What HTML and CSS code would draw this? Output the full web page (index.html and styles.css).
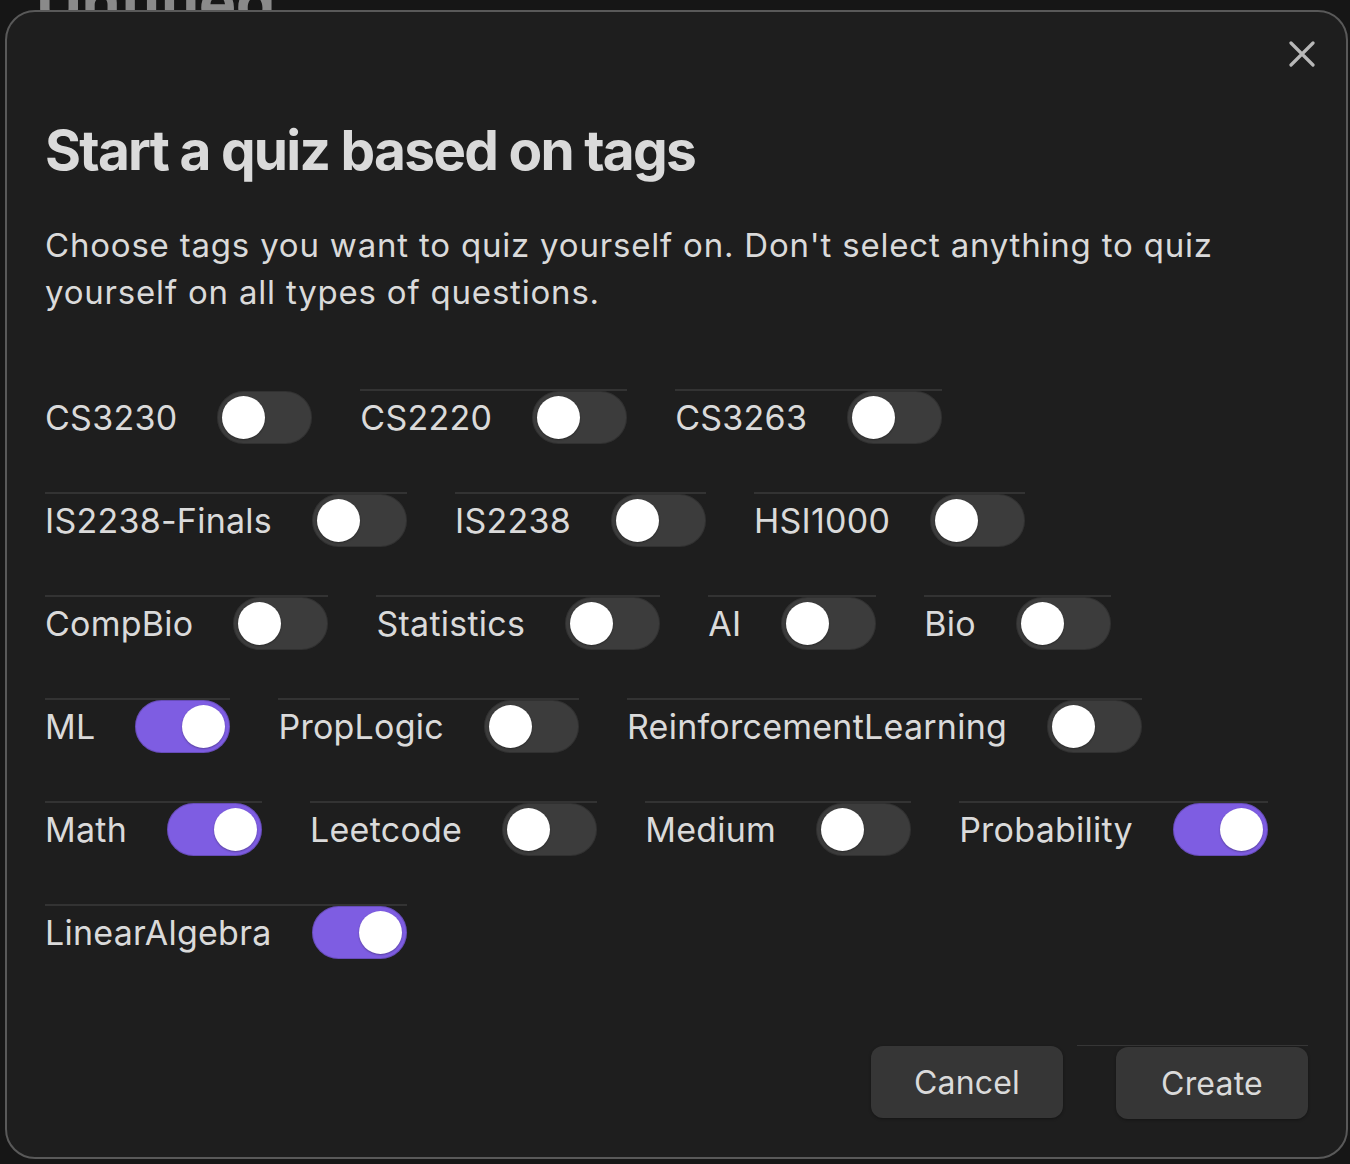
FILE: index.html
```html
<!DOCTYPE html>
<html>
<head>
<meta charset="utf-8">
<link rel="stylesheet" href="styles.css">
</head>
<body>
<div class="page">
  <h1 class="doc-title">Untitled</h1>
</div>
<div class="modal">
  <button class="close" aria-label="Close">
    <svg width="26" height="26" viewBox="0 0 26 26"><path d="M2 2 L24 24 M24 2 L2 24" stroke="#b8b8b8" stroke-width="3.2" stroke-linecap="round"/></svg>
  </button>
  <h2 class="title">Start a quiz based on tags</h2>
  <p class="desc">Choose tags you want to quiz yourself on. Don't select anything to quiz yourself on all types of questions.</p>
  <div class="tags">
    <div class="item first"><span class="label">CS3230</span><span class="toggle"></span></div>
    <div class="item"><span class="label">CS2220</span><span class="toggle"></span></div>
    <div class="item"><span class="label">CS3263</span><span class="toggle"></span></div>
    <div class="item"><span class="label">IS2238-Finals</span><span class="toggle"></span></div>
    <div class="item"><span class="label">IS2238</span><span class="toggle"></span></div>
    <div class="item"><span class="label">HSI1000</span><span class="toggle"></span></div>
    <div class="item"><span class="label">CompBio</span><span class="toggle"></span></div>
    <div class="item"><span class="label">Statistics</span><span class="toggle"></span></div>
    <div class="item"><span class="label">AI</span><span class="toggle"></span></div>
    <div class="item"><span class="label">Bio</span><span class="toggle"></span></div>
    <div class="item"><span class="label">ML</span><span class="toggle on"></span></div>
    <div class="item"><span class="label">PropLogic</span><span class="toggle"></span></div>
    <div class="item"><span class="label">ReinforcementLearning</span><span class="toggle"></span></div>
    <div class="item"><span class="label">Math</span><span class="toggle on"></span></div>
    <div class="item"><span class="label">Leetcode</span><span class="toggle"></span></div>
    <div class="item"><span class="label">Medium</span><span class="toggle"></span></div>
    <div class="item"><span class="label">Probability</span><span class="toggle on"></span></div>
    <div class="item"><span class="label">LinearAlgebra</span><span class="toggle on"></span></div>
  </div>
  <div class="footer">
    <button class="btn cancel">Cancel</button>
    <div class="btn-item"><button class="btn">Create</button></div>
  </div>
</div>
</body>
</html>
```
FILE: styles.css
```css
html, body {
  margin: 0;
  padding: 0;
  background: #161616;
  width: 1350px;
  height: 1164px;
  overflow: hidden;
  font-family: Inter, "Noto Sans", sans-serif;
  color: #dadada;
}
.page {
  padding-left: 36px;
}
.doc-title {
  margin: -36px 0 0 0;
  font-size: 63px;
  font-weight: 700;
  line-height: 76px;
  color: #8a8a8a;
  letter-spacing: -0.5px;
}
.modal {
  position: absolute;
  top: 10px;
  left: 5px;
  width: 1343px;
  height: 1149px;
  box-sizing: border-box;
  background: #1e1e1e;
  border: 2px solid #595959;
  border-radius: 30px;
  padding: 38px 38px 38px 38px;
}
.close {
  position: absolute;
  top: 29px;
  right: 31px;
  width: 26px;
  height: 26px;
  padding: 0;
  border: 0;
  background: none;
  display: block;
}
.close svg { display: block; }
.title {
  margin: 65px 0 0 0;
  font-size: 55px;
  line-height: 70px;
  font-weight: 700;
  letter-spacing: -1.75px;
  color: #dadada;
}
.desc {
  margin: 37px 0 0 0;
  font-size: 33px;
  line-height: 47px;
  letter-spacing: 0.8px;
  color: #dadada;
  width: 1230px;
}
.tags {
  margin-top: 73px;
  display: flex;
  flex-wrap: wrap;
  column-gap: 48px;
  row-gap: 48px;
}
.item {
  display: flex;
  align-items: center;
  border-top: 2px solid #333333;
  height: 55px;
  box-sizing: border-box;
  padding-top: 0;
}
.item.first {
  border-top-color: transparent;
}
.label {
  font-size: 34px;
  letter-spacing: 0.25px;
  color: #dadada;
  margin-right: 40px;
  white-space: nowrap;
}
.toggle {
  position: relative;
  width: 95px;
  height: 53px;
  border-radius: 27px;
  background: #3c3c3c;
  box-shadow: inset 0 0 0 1px rgba(0,0,0,0.18);
  flex: none;
}
.toggle::after {
  content: "";
  position: absolute;
  top: 5px;
  left: 5px;
  width: 43px;
  height: 43px;
  border-radius: 50%;
  background: #ffffff;
  box-shadow: 0 1px 2px rgba(0,0,0,0.3);
}
.toggle.on {
  background: #7e5de2;
}
.toggle.on::after {
  left: 47px;
}
.footer {
  margin-top: 86px;
  display: flex;
  justify-content: flex-end;
  align-items: flex-start;
}
.btn {
  width: 192px;
  height: 72px;
  border: 0;
  border-radius: 12px;
  background: #363636;
  color: #dadada;
  font-family: Inter, "Noto Sans", sans-serif;
  font-size: 32px;
  letter-spacing: 0.2px;
  box-shadow: 0 1px 3px rgba(0,0,0,0.35);
  padding: 0;
}
.cancel {
  margin-top: 1px;
}
.btn-item {
  margin-left: 14px;
  padding-left: 39px;
  padding-top: 1px;
  border-top: 1px solid #363636;
}
```
